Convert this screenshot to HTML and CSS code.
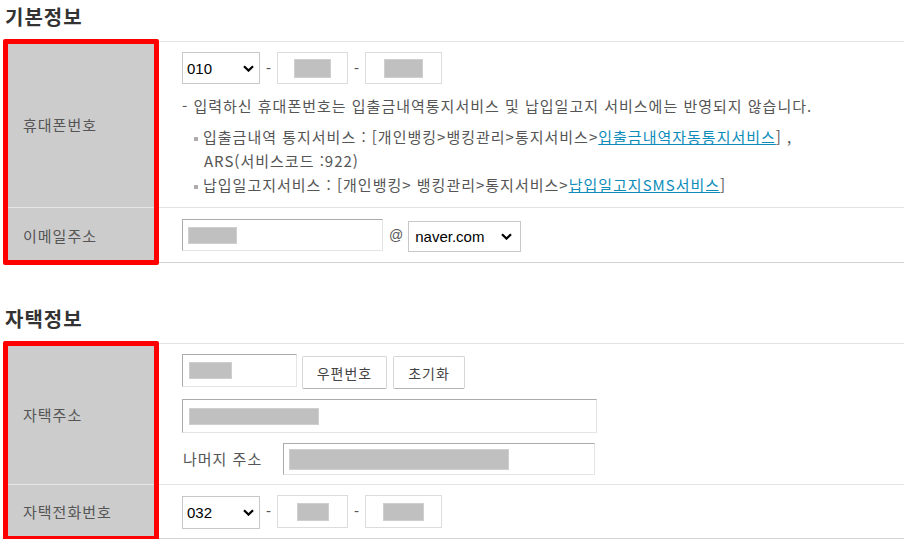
FILE: index.html
```html
<!DOCTYPE html>
<html lang="ko">
<head>
<meta charset="utf-8">
<title>기본정보</title>
<link rel="stylesheet" href="styles.css">
</head>
<body>
<div class="page">
  <section class="sec">
    <h2 class="sec-title">기본정보</h2>
    <div class="form-table">
      <div class="th r1">휴대폰번호</div>
      <div class="td r1">
        <div class="phone">
          <div class="sel-wrap">
            <select class="sel sel-phone"><option>010</option></select>
            <svg class="chev chev-phone" width="11" height="7" viewBox="0 0 11 7" aria-hidden="true"><path d="M1 1.2 L5.5 5.6 L10 1.2" fill="none" stroke="#000" stroke-width="2.2"/></svg>
          </div>
          <span class="dash">-</span>
          <div class="inp soft w-p2"><span class="mask m-37"></span></div>
          <span class="dash">-</span>
          <div class="inp soft w-p3"><span class="mask m-39"></span></div>
        </div>
        <div class="notice">
          <p>- 입력하신 휴대폰번호는 입출금내역통지서비스 및 납입일고지 서비스에는 반영되지 않습니다.</p>
          <ul class="sub">
            <li><span class="bul"></span>입출금내역 통지서비스 : [개인뱅킹&gt;뱅킹관리&gt;통지서비스&gt;<a class="lnk" href="#">입출금내역자동통지서비스</a>] ,<br>ARS(서비스코드 :922)</li>
            <li><span class="bul"></span>납입일고지서비스 : [개인뱅킹&gt; 뱅킹관리&gt;통지서비스&gt;<a class="lnk" href="#">납입일고지SMS서비스</a>]</li>
          </ul>
        </div>
      </div>
      <div class="th r2 last">이메일주소</div>
      <div class="td r2 last td-email">
        <div class="email">
          <div class="inp w-email"><span class="mask m-email"></span></div>
          <span class="at">@</span>
          <div class="sel-wrap sel-wrap-mail">
            <select class="sel sel-mail"><option>naver.com</option></select>
            <svg class="chev chev-mail" width="11" height="7" viewBox="0 0 11 7" aria-hidden="true"><path d="M1 1.2 L5.5 5.6 L10 1.2" fill="none" stroke="#000" stroke-width="2.2"/></svg>
          </div>
        </div>
      </div>
      <div class="hl"></div>
    </div>
  </section>

  <section class="sec">
    <h2 class="sec-title">자택정보</h2>
    <div class="form-table">
      <div class="th r1">자택주소</div>
      <div class="td r1 td-addr">
        <div class="zip-row">
          <div class="inp w-zip"><span class="mask m-zip"></span></div>
          <button class="btn btn-zip" type="button">우편번호</button>
          <button class="btn btn-reset" type="button">초기화</button>
        </div>
        <div class="inp w-addr"><span class="mask m-addr"></span></div>
        <div class="rest-row">
          <span class="rest-label">나머지 주소</span>
          <div class="inp w-rest"><span class="mask m-rest"></span></div>
        </div>
      </div>
      <div class="th r2 last">자택전화번호</div>
      <div class="td r2 last td-home">
        <div class="phone">
          <div class="sel-wrap sel-wrap-home">
            <select class="sel sel-phone sel-home"><option>032</option></select>
            <svg class="chev chev-phone" width="11" height="7" viewBox="0 0 11 7" aria-hidden="true"><path d="M1 1.2 L5.5 5.6 L10 1.2" fill="none" stroke="#000" stroke-width="2.2"/></svg>
          </div>
          <span class="dash">-</span>
          <div class="inp soft w-p2 tall"><span class="mask m-32"></span></div>
          <span class="dash">-</span>
          <div class="inp soft w-p3 tall"><span class="mask m-41"></span></div>
        </div>
      </div>
      <div class="hl"></div>
    </div>
  </section>
</div>
</body>
</html>
```

FILE: styles.css
```css
* { box-sizing: border-box; }

body {
  margin: 0;
  background: #fff;
  color: #555;
  font-family: "Liberation Sans", "Noto Sans CJK KR", sans-serif;
  font-size: 15px;
}

.page {
  width: 914px;
  padding: 0 10px 0 5px;
}

.sec + .sec { margin-top: 39px; }

.sec-title {
  margin: 0 0 9px;
  padding-top: 2px;
  height: 32px;
  line-height: 30px;
  font-family: "Noto Sans CJK KR", sans-serif;
  font-size: 20px;
  font-weight: 700;
  color: #333;
  letter-spacing: 1px;
}

.form-table {
  display: grid;
  grid-template-columns: 152px 1fr;
  grid-template-rows: auto auto;
  border-top: 1px solid #e3e3e3;
}

.r1 { grid-row: 1; }
.r2 { grid-row: 2; }

.th {
  grid-column: 1;
  display: flex;
  align-items: center;
  padding-left: 18px;
  background: #ccc;
  border-bottom: 1px solid #e6e6e6;
  font-family: "Noto Sans CJK KR", sans-serif;
  letter-spacing: 1px;
  color: #555;
}

.td {
  grid-column: 2;
  padding: 10px 0 10px 25px;
  border-bottom: 1px solid #e3e3e3;
}

.td.last { border-bottom-color: #d2d2d2; }
.td-email { padding-top: 11px; }
.td-addr { padding-bottom: 9px; }
.td-home { padding-bottom: 9px; }

.hl {
  grid-column: 1;
  grid-row: 1 / 3;
  margin: -3px -2px -2px -2px;
  border: 5px solid #f00;
  border-radius: 2px;
  z-index: 2;
  pointer-events: none;
}

/* controls */
.phone, .email, .zip-row, .rest-row {
  display: flex;
  align-items: flex-start;
}

.sel-wrap {
  display: flex;
  align-items: center;
}
.sel-wrap-mail { margin-top: 2px; }
.sel-wrap-home { margin-top: 1px; }

.sel {
  appearance: none;
  -webkit-appearance: none;
  height: 32px;
  border: 1px solid #c8c8c8;
  border-radius: 0;
  background: #fff;
  color: #000;
  font-family: "Liberation Sans", sans-serif;
  font-size: 15px;
  padding: 0 0 0 4px;
  outline: none;
}

.chev {
  display: block;
  flex: none;
  pointer-events: none;
}
.chev-phone { margin-left: -17px; margin-right: 6px; }
.chev-mail { margin-left: -20px; margin-right: 9px; }

.sel-phone { width: 78px; }
.sel-home { height: 33px; }
.sel-mail { width: 113px; height: 31px; padding-left: 6px; }

.dash {
  width: 17px;
  text-align: center;
  line-height: 32px;
  color: #555;
}

.at {
  margin: 0 5px 0 6px;
  line-height: 32px;
  font-size: 14px;
  color: #555;
}

.inp {
  height: 32px;
  display: flex;
  align-items: center;
  padding-left: 5px;
  background: #fff;
  border: 1px solid;
  border-color: #ababab #e4e4e4 #e4e4e4 #ababab;
}

.inp.soft {
  justify-content: center;
  padding-left: 0;
  border-color: #dcdcdc;
}
.inp.tall { height: 33px; }

.w-p2 { width: 71px; }
.w-p3 { width: 77px; }
.w-email { width: 201px; }
.w-zip { width: 115px; height: 33px; padding-left: 6px; }
.w-addr { width: 415px; height: 34px; margin-top: 10px; padding-left: 6px; }
.w-rest { width: 312px; }

.mask {
  display: block;
  background: #c0c0c0;
  outline: 1px solid #cfcfcf;
  outline-offset: -1px;
}

.m-37 { width: 37px; height: 19px; }
.m-39 { width: 39px; height: 19px; }
.m-32 { width: 32px; height: 18px; }
.m-41 { width: 41px; height: 18px; }
.m-email { width: 49px; height: 17px; }
.m-zip { width: 43px; height: 17px; }
.m-addr { width: 130px; height: 17px; }
.m-rest { width: 220px; height: 21px; }

.btn {
  height: 33px;
  margin-top: 2px;
  margin-left: 5px;
  padding: 0;
  background: #fff;
  border: 1px solid #d6d6d6;
  border-bottom-color: #b3b3b3;
  border-radius: 2px;
  font-family: "Noto Sans CJK KR", sans-serif;
  font-size: 14px;
  letter-spacing: 1px;
  color: #444;
}
.btn-zip { width: 85px; }
.btn-reset { width: 72px; margin-left: 6px; }

.rest-row { margin-top: 10px; }
.rest-label {
  width: 101px;
  padding-left: 1px;
  line-height: 32px;
  font-family: "Noto Sans CJK KR", sans-serif;
  letter-spacing: 1px;
  color: #555;
}

/* notice */
.notice {
  margin-top: 10px;
  line-height: 24px;
  white-space: nowrap;
  font-family: "Noto Sans CJK KR", sans-serif;
  letter-spacing: 1px;
  color: #555;
}
.notice p { margin: 0; }

.sub {
  margin: 7px 0 0;
  padding-left: 22px;
  list-style: none;
}

.bul {
  display: inline-block;
  width: 4px;
  height: 4px;
  margin-left: -10px;
  margin-right: 5px;
  vertical-align: middle;
  background: #b0aaaa;
}

.lnk {
  color: #0d8cba;
  text-decoration: underline;
}
```
